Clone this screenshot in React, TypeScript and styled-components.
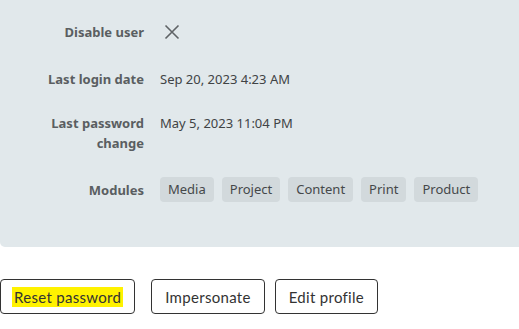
import React from 'react'
import styled, { createGlobalStyle } from 'styled-components'

const GlobalStyle = createGlobalStyle`
    body {
        margin: 0;
        background: #fff;
        font-family: 'Noto Sans', 'Open Sans', sans-serif;
    }
`

const modules: string[] = ['Media', 'Project', 'Content', 'Print', 'Product']

const CloseIcon: React.FC = () => (
    <svg width="16" height="16" viewBox="0 0 16 16" fill="none">
        <path d="M1.5 1.5L14.5 14.5M14.5 1.5L1.5 14.5" stroke="#5f6366" strokeWidth="1.6" />
    </svg>
)

export default function App() {
    return (
        <Page>
            <GlobalStyle />
            <Panel>
                <Row>
                    <Label>Disable user</Label>
                    <Value>
                        <IconWrap>
                            <CloseIcon />
                        </IconWrap>
                    </Value>
                </Row>
                <Row>
                    <Label>Last login date</Label>
                    <Value>Sep 20, 2023 4:23 AM</Value>
                </Row>
                <Row>
                    <Label>
                        Last password
                        <br />
                        change
                    </Label>
                    <Value>May 5, 2023 11:04 PM</Value>
                </Row>
                <Row>
                    <Label $chip>Modules</Label>
                    <Chips>
                        {modules.map((m) => (
                            <Chip key={m}>{m}</Chip>
                        ))}
                    </Chips>
                </Row>
            </Panel>
            <Actions>
                <Button>
                    <Highlight>Reset password</Highlight>
                </Button>
                <Button $gapLeft>Impersonate</Button>
                <Button>Edit profile</Button>
            </Actions>
        </Page>
    )
}

const Page = styled.div`
    width: 519px;
`
const Panel = styled.div`
    display: flex;
    flex-direction: column;
    gap: 24px;
    background-color: #e1e8eb;
    border-radius: 0 0 0 5px;
    padding: 22px 0 0 0;
    height: 247px;
    box-sizing: border-box;
`
const Row = styled.div`
    display: grid;
    grid-template-columns: 144px 1fr;
    column-gap: 16px;
    align-items: start;
`
const Label = styled.div<{ $chip?: boolean }>`
    text-align: right;
    font-size: 13px;
    line-height: 20px;
    font-weight: 700;
    color: #5a5e61;
    padding-top: ${(p) => (p.$chip ? '3px' : '0')};
`
const Value = styled.div`
    font-size: 13px;
    line-height: 20px;
    color: #404345;
`
const IconWrap = styled.span`
    display: inline-flex;
    align-items: center;
    height: 20px;
    padding-left: 4px;
`
const Chips = styled.div`
    display: flex;
    gap: 8px;
`
const Chip = styled.span`
    background-color: #d2d9dc;
    border-radius: 4px;
    padding: 0 8px;
    height: 25px;
    line-height: 25px;
    font-size: 13px;
    color: #45484a;
`
const Actions = styled.div`
    display: flex;
    gap: 10px;
    margin-top: 32px;
`
const Button = styled.button<{ $gapLeft?: boolean }>`
    height: 35px;
    padding: 0 13px;
    margin-left: ${(p) => (p.$gapLeft ? '6px' : '0')};
    border: 1px solid #333;
    border-radius: 4px;
    background: #fff;
    font-family: 'Lato', sans-serif;
    font-size: 15px;
    color: #333;
    letter-spacing: 0.3px;
`
const Highlight = styled.span`
    background-color: #fff200;
    padding: 1px 2px;
    margin: 0 -2px;
`
